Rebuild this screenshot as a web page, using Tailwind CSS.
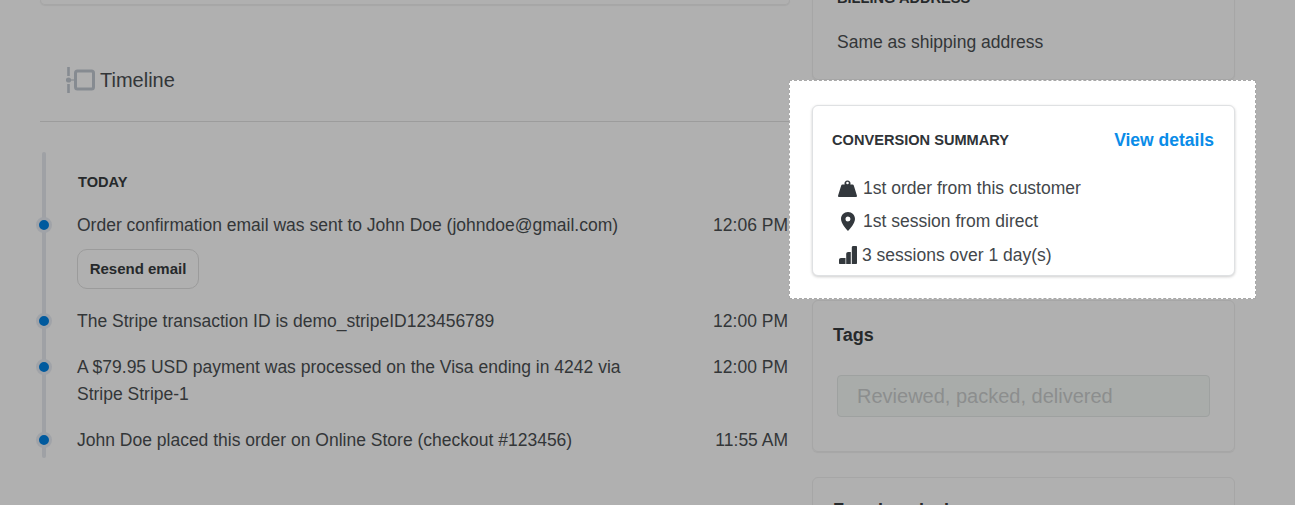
<!DOCTYPE html>
<html lang="en">
<head>
  <meta charset="UTF-8" />
  <title>Order timeline</title>
  <script src="https://cdn.jsdelivr.net/npm/@tailwindcss/browser@4"></script>
</head>
<body class="bg-[#b0b0b0] text-[#333638] font-['Liberation_Sans',Arial,sans-serif] text-[17.5px]">
  <div class="h-[505px] w-[1295px] overflow-hidden flex items-start pl-[40px]">

    <!-- left column -->
    <div class="w-[750px] shrink-0">
      <div class="h-[5px] border border-t-0 border-[#a6a6a6] rounded-b-md shadow-[0_1px_1px_rgba(0,0,0,0.06)]"></div>

      <div class="h-[117px] border-b border-[#9c9c9c] flex items-center gap-[5px] pl-[26px] pb-[1px] pt-[35px]">
        <svg width="29" height="26" viewBox="0 0 29 26" class="shrink-0">
          <path d="M2.500 0v9M2.500 17v9" stroke="#868b91" stroke-width="2.600" />
          <circle cx="2.500" cy="13" r="2.600" fill="#868b91" />
          <path d="M5 13h3.500" stroke="#868b91" stroke-width="1.200" />
          <rect x="9.500" y="4" width="18" height="18" rx="2" fill="none" stroke="#868b91" stroke-width="3" />
        </svg>
        <span class="text-[20px] leading-none">Timeline</span>
      </div>

      <div class="relative mt-[30px] pt-[22px] w-[748px]">
        <div class="absolute left-[2px] top-0 w-[4px] h-[306px] bg-[#9fa1a5] rounded-full"></div>

        <div class="pl-[38px] text-[14.600px] font-bold leading-4 text-[#26292b]">TODAY</div>

        <div class="relative pl-[37px] mt-[22px] flex justify-between leading-[27px]">
          <span class="absolute left-[-4px] top-[5px] w-[16px] h-[16px] rounded-full bg-[#005a9e] border-[3px] border-[#a0a3a8]"></span>
          <div>
            <p>Order confirmation email was sent to John Doe (johndoe@gmail.com)</p>
            <button class="mt-[10px] h-[40px] w-[122px] rounded-[10px] border border-[#9b9b9b] pb-[1px] text-[15px] font-bold text-[#26292b]">Resend email</button>
          </div>
          <span>12:06 PM</span>
        </div>

        <div class="relative pl-[37px] mt-[19px] flex justify-between leading-[27px]">
          <span class="absolute left-[-4px] top-[5px] w-[16px] h-[16px] rounded-full bg-[#005a9e] border-[3px] border-[#a0a3a8]"></span>
          <p>The Stripe transaction ID is demo_stripeID123456789</p>
          <span>12:00 PM</span>
        </div>

        <div class="relative pl-[37px] mt-[19px] flex justify-between leading-[27px]">
          <span class="absolute left-[-4px] top-[5px] w-[16px] h-[16px] rounded-full bg-[#005a9e] border-[3px] border-[#a0a3a8]"></span>
          <p class="w-[560px]">A $79.95 USD payment was processed on the Visa ending in 4242 via Stripe Stripe-1</p>
          <span>12:00 PM</span>
        </div>

        <div class="relative pl-[37px] mt-[19px] flex justify-between leading-[27px]">
          <span class="absolute left-[-4px] top-[5px] w-[16px] h-[16px] rounded-full bg-[#005a9e] border-[3px] border-[#a0a3a8]"></span>
          <p>John Doe placed this order on Online Store (checkout #123456)</p>
          <span>11:55 AM</span>
        </div>
      </div>
    </div>

    <!-- right column -->
    <div class="ml-[22px] w-[423px] shrink-0 flex flex-col gap-[25px] -mt-[40px]">
      <div class="h-[120px] border border-[#a6a6a6] rounded-md shadow-[0_1px_1px_rgba(0,0,0,0.06)] px-[24px] pt-[29px]">
        <h3 class="text-[14.600px] font-bold leading-4 text-[#26292b]">BILLING ADDRESS</h3>
        <p class="mt-[24px] leading-6">Same as shipping address</p>
      </div>

      <!-- highlighted card -->
      <div class="relative -mb-[1px]">
        <div class="absolute -left-[23px] -right-[21px] -top-[25px] -bottom-[23px] bg-white border border-dashed border-[#a8a8a8]"></div>
        <div class="relative h-[171px] bg-white border border-[#dfe1e3] rounded-md shadow-[0_1px_3px_rgba(0,0,0,0.2)] pl-[19px] pr-[20px] pt-[24px]">
          <div class="flex items-center justify-between">
            <h3 class="text-[14.600px] font-bold leading-5 text-[#2f3337]">CONVERSION SUMMARY</h3>
            <a class="text-[17.500px] font-bold leading-5 text-[#0a8ce8]">View details</a>
          </div>
          <ul class="mt-[26px] leading-[24px] text-[#43474b]">
            <li class="flex items-center h-[24px] gap-[6px] pl-[6px]">
              <svg width="19" height="18" viewBox="0 0 19 18" class="shrink-0">
                <path fill-rule="evenodd" fill="#33383d" d="M6.700 5.500A3 3 0 1 1 12.300 5.500H14.500C15.200 5.500 15.600 5.900 15.800 6.500L18.900 16.500C19.100 17.400 18.700 18 17.800 18H1.200C.3 18-.1 17.400.1 16.500L3.200 6.500C3.400 5.900 3.800 5.500 4.500 5.500ZM8.200 4A1.300 1.300 0 1 0 10.800 4 1.300 1.300 0 1 0 8.200 4Z" />
              </svg>
              <span>1st order from this customer</span>
            </li>
            <li class="flex items-center h-[24px] mt-[9px] gap-[8px] pl-[9px]">
              <svg width="14" height="19" viewBox="0 0 14 19" class="shrink-0">
                <path fill-rule="evenodd" fill="#33383d" d="M7 0C3 0 0 3 0 7c0 4.200 4.800 9.500 7 12 2.200-2.500 7-7.800 7-12 0-4-3-7-7-7zm0 9.500a2.500 2.500 0 1 1 0-5 2.500 2.500 0 0 1 0 5z" />
              </svg>
              <span>1st session from direct</span>
            </li>
            <li class="flex items-center h-[24px] mt-[10px] gap-[5px] pl-[7px]">
              <svg width="18" height="18" viewBox="0 0 18 18" class="shrink-0">
                <path fill="#33383d" d="M0 14C0 12.800.8 12 2 12H6.500V18H1C.4 18 0 17.600 0 17ZM7.200 18V8C7.200 6.800 8 6 9.200 6H11.800V18ZM12.800 18V1.500C12.800.6 13.400 0 14.300 0H17C17.600 0 18 .4 18 1V17C18 17.600 17.600 18 17 18Z" />
              </svg>
              <span>3 sessions over 1 day(s)</span>
            </li>
          </ul>
        </div>
      </div>

      <div class="h-[152px] border border-[#a6a6a6] rounded-md shadow-[0_1px_1px_rgba(0,0,0,0.06)] pt-[22px]">
        <h3 class="pl-[20px] text-[18px] font-bold leading-6 text-[#26292b]">Tags</h3>
        <div class="mt-[28px] ml-[24px] w-[373px] h-[42px] bg-[#a9acaa] border border-[#9ea1a0] rounded-[4px] pl-[19px] flex items-center text-[20px] text-[#8c8e8e]">Reviewed, packed, delivered</div>
      </div>

      <div class="h-[80px] border border-[#a6a6a6] rounded-md pt-[20px]">
        <h3 class="pl-[20px] text-[18px] font-bold leading-6 text-[#26292b]">Fraud analysis</h3>
      </div>
    </div>
  </div>
</body>
</html>
